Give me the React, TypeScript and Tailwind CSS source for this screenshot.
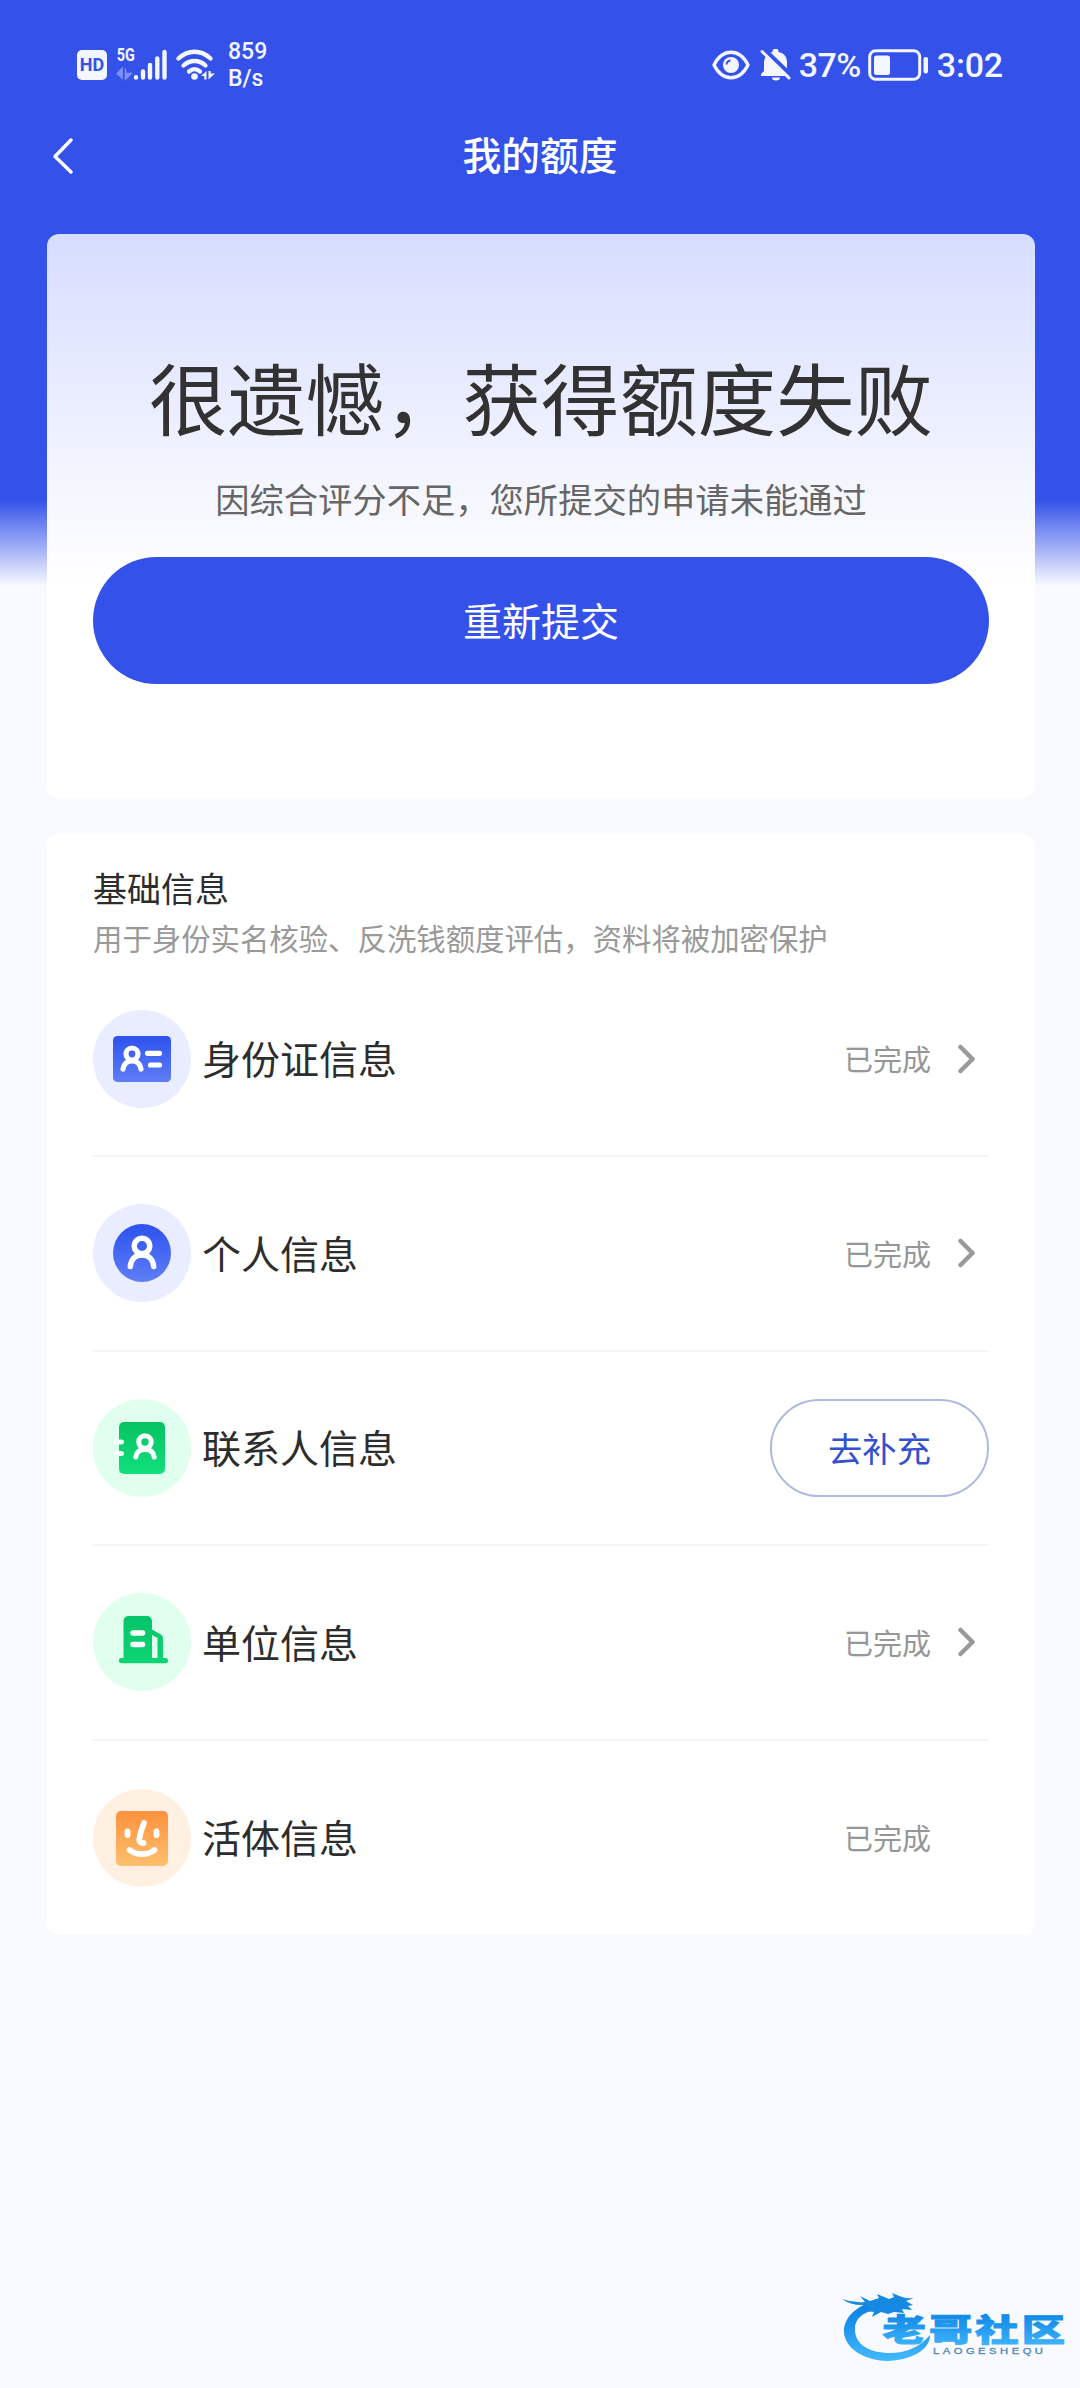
import type { ReactNode } from "react";

type InfoItem = {
  title: string;
  icon: ReactNode;
  iconBg: string;
  done: boolean;
  arrow?: boolean;
};

// =========================
// STATUS BAR
// =========================

function SignalIcon() {
  return (
    <div className="ml-[9px] w-[52px]">
      <div className="h-[14px] w-[20px] origin-left scale-x-[0.780] whitespace-nowrap pl-px text-[18.500px] font-bold leading-[14px]">
        5G
      </div>
      <svg width="52" height="34" viewBox="0 0 52 34" className="-mt-[14px]">
        <path
          d="M0.800 26 6 20.500V31M9.500 20.500V31L15 25.500H9.500"
          fill="#7f92f3"
          stroke="#7f92f3"
          strokeWidth="1.600"
        />
        <path
          d="M20 29.300v.2M27 23.500v6M34 17v12.500M41.300 10.500v19M48.500 4v25.500"
          stroke="#f3f5ff"
          strokeWidth="4.400"
          strokeLinecap="round"
        />
      </svg>
    </div>
  );
}

function WifiIcon() {
  return (
    <svg width="40" height="34" viewBox="0 0 40 34" className="ml-[8px]" fill="none">
      <g stroke="#f3f5ff" strokeWidth="4.300" strokeLinecap="round">
        <path d="M2.500 10.500C12 1.500 25 1.500 34.500 10.500" />
        <path d="M7.500 17.500C14 11.500 23 11.500 29.500 17.500" />
        <path d="M13 23.500C16.500 20.500 20.500 20.500 24 23.500" />
      </g>
      <circle cx="18.500" cy="28.500" r="3.300" fill="#f3f5ff" />
      <path
        d="M25 28 30.500 23v8.500h-2.200V28zM32.500 23v8.500l6.500-6h-4.300V23z"
        fill="#f3f5ff"
      />
    </svg>
  );
}

function StatusBar() {
  return (
    <div className="flex h-[110px] items-center justify-between pl-[77px] pr-[77px] pt-[19px] font-['Roboto',sans-serif] font-medium text-[#f3f5ff]">
      <div className="flex items-center">
        <div className="flex h-[30px] w-[30px] items-center justify-center rounded-[5px] bg-[#f3f5ff] text-[18px] font-bold leading-none text-[#3452ea]">
          HD
        </div>
        <SignalIcon />
        <WifiIcon />
        <div className="ml-[12px] text-[23px] leading-[27px]">
          <div>859</div>
          <div>B/s</div>
        </div>
      </div>

      <div className="flex items-center text-[34px] leading-none">
        <svg width="38" height="30" viewBox="0 0 38 30" fill="none">
          <path
            d="M2 15C6 7 12 2.300 19 2.300S32 7 36 15C32 23 26 27.700 19 27.700S6 23 2 15Z"
            stroke="#f3f5ff"
            strokeWidth="3.400"
            strokeLinejoin="round"
          />
          <circle cx="19" cy="15" r="8" fill="#f3f5ff" />
          <path d="M14.500 14.500a4.500 4.500 0 0 1 4-4" stroke="#3452ea" strokeWidth="2" />
        </svg>
        <svg width="32" height="32" viewBox="0 0 32 32" className="ml-[10px]">
          <path
            d="M4 22V14C4 8 8 4 12.500 3V2.500a3 3 0 0 1 6 0V3C24 4 27 8 27 13v8l3 4v2H1v-2z"
            fill="#f3f5ff"
          />
          <path d="M12 28.500h8a4 3 0 0 1-8 0Z" fill="#f3f5ff" />
          <path d="M3.500-.5 32 27" stroke="#3452ea" strokeWidth="4" />
          <path d="M2 2.500 29 29" stroke="#f3f5ff" strokeWidth="3" strokeLinecap="round" />
        </svg>
        <span className="ml-[7px] w-[62px] tracking-[-0.600px]">37%</span>
        <svg width="61" height="32" viewBox="0 0 61 32" className="ml-[7px]" fill="none">
          <rect x="1.700" y="1.700" width="50" height="28.600" rx="6" stroke="#f3f5ff" strokeWidth="3" />
          <rect x="6" y="6.500" width="16" height="19.500" rx="2.500" fill="#f3f5ff" />
          <rect x="55.500" y="8" width="4.500" height="16.500" rx="2" fill="#f3f5ff" />
        </svg>
        <span className="ml-[8px] tracking-[-0.200px]">3:02</span>
      </div>
    </div>
  );
}

// =========================
// ICONS
// =========================

// 58x58 drawings, centred in the round badge
function IdCardIcon() {
  return (
    <svg width="58" height="58" viewBox="0 0 58 58" fill="none">
      <defs>
        <linearGradient id="idCard" x1="0" y1="0" x2="0" y2="1">
          <stop stopColor="#2d52ee" />
          <stop offset="1" stopColor="#5f7ef8" />
        </linearGradient>
      </defs>
      <rect y="6" width="58" height="46" rx="4.500" fill="url(#idCard)" />
      <g stroke="#fff" strokeWidth="5.200" strokeLinecap="round">
        <circle cx="19" cy="24" r="6" />
        <path d="M10 39C11 33 14.500 31 19 31S27 33 28 39" />
        <path d="M34.500 23.300h12M37.500 35H46.500" />
      </g>
    </svg>
  );
}

function PersonIcon() {
  return (
    <svg width="58" height="58" viewBox="0 0 58 58" fill="none">
      <defs>
        <linearGradient id="person" x1="0" y1="0" x2="0" y2="1">
          <stop stopColor="#2d52ee" />
          <stop offset="1" stopColor="#5f7ef8" />
        </linearGradient>
      </defs>
      <circle cx="29" cy="29" r="29" fill="url(#person)" />
      <g stroke="#fff" strokeWidth="5.500" strokeLinecap="round">
        <circle cx="29" cy="22" r="7.800" />
        <path d="M17.300 42.500C18 35 22.500 31 29 31S40 35 40.700 42.500" />
      </g>
    </svg>
  );
}

function ContactIcon() {
  return (
    <svg width="58" height="58" viewBox="0 0 58 58" fill="none">
      <defs>
        <linearGradient id="contact" x1="0" y1="0" x2="0" y2="1">
          <stop stopColor="#06c160" />
          <stop offset="1" stopColor="#11e07e" />
        </linearGradient>
      </defs>
      <rect x="6" y="3" width="46" height="52" rx="5" fill="url(#contact)" />
      <g stroke="#fff" strokeWidth="5" strokeLinecap="round">
        <circle cx="32" cy="23" r="6.200" />
        <path d="M22.800 38C23.500 32.500 26.500 30.500 32 30.500S40.500 32.500 41.200 38" />
      </g>
      <path d="M2.500 23h6M2.500 34.500h6" stroke="#f4fff9" strokeWidth="5" strokeLinecap="round" />
    </svg>
  );
}

function BuildingIcon() {
  return (
    <svg width="58" height="58" viewBox="0 0 58 58" fill="none">
      <defs>
        <linearGradient id="building" x1="0" y1="0" x2="0" y2="1">
          <stop stopColor="#06c468" />
          <stop offset="1" stopColor="#0dd574" />
        </linearGradient>
      </defs>
      <path
        d="M10.500 8a5 5 0 0 1 5-5H34a5 5 0 0 1 5 5v8.500l8.500 4.800a5 5 0 0 1 2.500 4.400V45h2.500a2.600 2.600 0 0 1 0 5.200H8.500a2.600 2.600 0 0 1 0-5.200h2zM39 22v23h5.500V25z"
        fill="url(#building)"
      />
      <path d="M20 20h9.500M20 31.500h9.500" stroke="#fff" strokeWidth="5.500" strokeLinecap="round" />
    </svg>
  );
}

function FaceIcon() {
  return (
    <svg width="58" height="58" viewBox="0 0 58 58" fill="none">
      <defs>
        <linearGradient id="face" x1="0" y1="0" x2="0" y2="1">
          <stop stopColor="#fd913d" />
          <stop offset="1" stopColor="#fdc06f" />
        </linearGradient>
      </defs>
      <rect x="3" y="2" width="52" height="55" rx="5" fill="url(#face)" />
      <g stroke="#fff" strokeWidth="5.800" strokeLinecap="round" strokeLinejoin="round">
        <path d="M14.500 22.500v3.500M43.500 22.500v3.500" />
        <path d="M31 14C28.500 20 27 25 26.200 30.500Q26 34 30.500 34" />
        <path d="M16.500 41C23.500 46.500 34.500 46.500 41.500 41" />
      </g>
    </svg>
  );
}

function ForumLogo() {
  return (
    <svg width="226" height="76" viewBox="0 0 226 76" fill="none">
      <defs>
        <linearGradient id="logoText" x1="0" y1="0" x2="0" y2="1">
          <stop stopColor="#087fdf" />
          <stop offset="0.500" stopColor="#2299ef" />
          <stop offset="1" stopColor="#45b9ff" />
        </linearGradient>
      </defs>
      {/* dragon */}
      <path
        d="M31 15C13 19 1 32 2 46 4 62 22 73 45 74 70 73 88 63 88 48 78 60 64 66 48 66 27 66 13 57 13 43 12 33 20 25 34 23Z"
        fill="url(#logoText)"
      />
      <path
        d="M0 12Q11 16 23 15L18 9 28 14 37 11 35 7 47 12 52 10 50 6 60 10Q66 12 72 11L64 14 71 18 66 19 70 23 60 22 62 26 52 25 46 27 39 25 30 30 32 25 24 24 29 20 20 18Q8 18 0 12Z"
        fill="#168ae3"
      />
      <text
        transform="translate(40.500 53.500) scale(1.420 1)"
        fontFamily="Noto Sans CJK SC, sans-serif"
        fontWeight="900"
        fontSize="30.500"
        letterSpacing="2.200"
        fill="url(#logoText)"
        stroke="url(#logoText)"
        strokeWidth="1"
      >
        老哥社区
      </text>
      <text
        transform="translate(91 67) scale(1.250 1)"
        fontFamily="Liberation Sans, sans-serif"
        fontSize="9"
        textLength="88"
        fill="#4a86ba"
        stroke="#4a86ba"
        strokeWidth="0.300"
      >
        LAOGESHEQU
      </text>
    </svg>
  );
}

// =========================
// DATA
// =========================

const items: InfoItem[] = [
  { title: "身份证信息", icon: <IdCardIcon />, iconBg: "bg-[#eaedff]", done: true, arrow: true },
  { title: "个人信息", icon: <PersonIcon />, iconBg: "bg-[#eaedff]", done: true, arrow: true },
  { title: "联系人信息", icon: <ContactIcon />, iconBg: "bg-[#e0ffee]", done: false },
  { title: "单位信息", icon: <BuildingIcon />, iconBg: "bg-[#e0ffee]", done: true, arrow: true },
  { title: "活体信息", icon: <FaceIcon />, iconBg: "bg-[#fff0e1]", done: true },
];

function InfoRow({ item }: { item: InfoItem }) {
  return (
    <div className="flex h-[194.500px] items-center border-b-2 border-[#f5f5f6] last:border-b-0">
      <div
        className={`flex h-[98px] w-[98px] items-center justify-center rounded-full ${item.iconBg}`}
      >
        {item.icon}
      </div>
      <span className="ml-[11px] pb-[3px] text-[39px] text-[#2d2d2d]">{item.title}</span>

      {item.done ? (
        <div className="ml-auto flex items-center pr-[13px]">
          <span className="text-[29px] text-[#969696]">已完成</span>
          <div className="ml-[27px] h-[30px] w-[18px]">
            {item.arrow && (
              <svg width="18" height="30" viewBox="0 0 18 30" fill="none">
                <path
                  d="M2.500 3 14.500 15 2.500 27"
                  stroke="#999"
                  strokeWidth="4.500"
                  strokeLinecap="round"
                  strokeLinejoin="round"
                />
              </svg>
            )}
          </div>
        </div>
      ) : (
        <button className="ml-auto h-[98px] w-[219px] rounded-full border-2 border-[#b0b9e2] text-[34.300px] text-[#3350cf]">
          去补充
        </button>
      )}
    </div>
  );
}

export default function App() {
  return (
    <div className="flex h-[2388px] w-[1080px] flex-col bg-[linear-gradient(180deg,#3452ea_0px,#3452ea_500px,#f9faff_586px)] font-['Noto_Sans_CJK_SC',sans-serif]">
      <StatusBar />

      {/* NAV */}
      <div className="grid h-[92px] grid-cols-3 items-center text-white">
        <svg width="25" height="40" viewBox="0 0 25 40" fill="none" className="ml-[50px]">
          <path
            d="M21 4 5 20.500 21 36"
            stroke="#fff"
            strokeWidth="3.500"
            strokeLinecap="round"
            strokeLinejoin="round"
          />
        </svg>
        <h1 className="pb-[5px] text-center text-[38.800px] font-medium">我的额度</h1>
      </div>

      {/* RESULT */}
      <section className="ml-[47px] mt-[32px] h-[564px] w-[988px] rounded-[12px] bg-[linear-gradient(180deg,#d7ddff_0px,#ffffff_350px)] px-[46px] pt-[112px] text-center">
        <h2 className="text-[78.400px] leading-[100px] text-[#323232]">很遗憾，获得额度失败</h2>
        <p className="mt-[27px] text-[34.300px] leading-[50px] text-[#666]">
          因综合评分不足，您所提交的申请未能通过
        </p>
        <button className="mt-[34px] h-[127px] w-full rounded-full bg-[#3452ea] pb-[2px] text-[39px] text-white">
          重新提交
        </button>
      </section>

      {/* BASIC INFO */}
      <section className="ml-[47px] mt-[36px] h-[1101px] w-[988px] rounded-[12px] bg-white px-[46px]">
        <div className="h-[128.500px] pt-[29px]">
          <h3 className="text-[34px] leading-[50px] text-[#2d2d2d]">基础信息</h3>
          <p className="text-[29.400px] leading-[49px] text-[#999]">
            用于身份实名核验、反洗钱额度评估，资料将被加密保护
          </p>
        </div>
        {items.map((item) => (
          <InfoRow key={item.title} item={item} />
        ))}
      </section>

      <div className="mb-[25px] ml-[842px] mt-auto">
        <ForumLogo />
      </div>
    </div>
  );
}
